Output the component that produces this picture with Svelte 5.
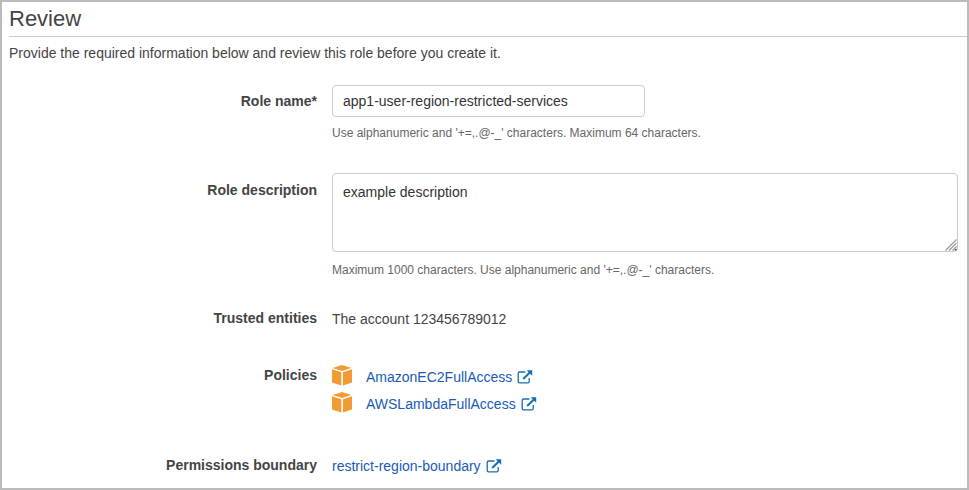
<script>
  let roleName = $state('app1-user-region-restricted-services');
  let description = $state('example description');
  const policies = ['AmazonEC2FullAccess', 'AWSLambdaFullAccess'];
</script>

{#snippet external()}
  <svg class="external" viewBox="0 0 16 14" width="16" height="14" aria-hidden="true">
    <path d="M8.4 2H2.6Q1.2 2 1.2 3.4V11.4Q1.2 12.8 2.6 12.8H10.8Q12.2 12.8 12.2 11.4V8" fill="none" stroke="currentColor" stroke-width="1.3" />
    <path d="M6.2 9L12.6 2.8" fill="none" stroke="currentColor" stroke-width="2" />
    <path d="M9.6 0.2H15.2V5.8Z" fill="currentColor" />
  </svg>
{/snippet}

<main>
  <h1>Review</h1>
  <p class="intro">Provide the required information below and review this role before you create it.</p>

  <form>
    <div class="row name">
      <label for="role-name">Role name*</label>
      <div class="field">
        <input id="role-name" type="text" bind:value={roleName} aria-describedby="name-help" />
        <p class="help" id="name-help">Use alphanumeric and '+=,.@-_' characters. Maximum 64 characters.</p>
      </div>
    </div>

    <div class="row description">
      <label for="role-description">Role description</label>
      <div class="field">
        <div class="area">
          <textarea id="role-description" bind:value={description} aria-describedby="description-help"></textarea>
          <svg class="grip" viewBox="0 0 12 12" width="12" height="12" aria-hidden="true">
            <path d="M0.5 11.5L11.5 0.5M4 11.5L11.5 4M7.5 11.5L11.5 7.5" stroke="#999" stroke-width="1.2" />
            <path d="M10 11.5L11.5 10" stroke="#555" stroke-width="1.4" />
          </svg>
        </div>
        <p class="help" id="description-help">Maximum 1000 characters. Use alphanumeric and '+=,.@-_' characters.</p>
      </div>
    </div>

    <div class="row trusted">
      <span class="label">Trusted entities</span>
      <span class="value">The account 123456789012</span>
    </div>

    <div class="row policies">
      <span class="label">Policies</span>
      <ul>
        {#each policies as policy}
          <li>
            <svg class="cube" viewBox="0 0 20 21" width="20" height="21" aria-hidden="true">
              <path d="M10 0L19.4 2.9L10 5.9L0.6 2.9Z" fill="#f29b34" />
              <path d="M0 4.2L9.3 7.2V20.6L0 17.5Z" fill="#f29b34" />
              <path d="M20 4.2L10.9 7.2V20.6L20 17.5Z" fill="#f29b34" />
            </svg>
            <a href="#{policy}">{policy}{@render external()}</a>
          </li>
        {/each}
      </ul>
    </div>

    <div class="row boundary">
      <span class="label">Permissions boundary</span>
      <span class="value"><a href="#boundary">restrict-region-boundary{@render external()}</a></span>
    </div>
  </form>
</main>

<style>
  :global(body) {
    margin: 0;
    background: #fff;
  }
  main {
    box-sizing: border-box;
    min-height: 100vh;
    padding: 0 0 10px 7px;
    border: 2px solid #bbb;
    color: #444;
    font: 14px/20px "Liberation Sans", Arial, sans-serif;
  }
  h1 {
    margin: 0;
    padding: 3px 0;
    border-bottom: 1px solid #ccc;
    font-size: 22px;
    line-height: 28px;
    font-weight: 400;
  }
  p {
    margin: 0;
  }
  .intro {
    padding-top: 6px;
  }
  form {
    padding: 22px 9px 0 0;
  }
  .row {
    display: grid;
    grid-template-columns: minmax(160px, 308px) minmax(0, 1fr);
    column-gap: 15px;
    align-items: start;
  }
  label,
  .label {
    text-align: right;
    font-weight: 700;
  }
  label {
    padding-top: 6px;
  }
  input,
  textarea {
    display: block;
    box-sizing: border-box;
    width: 100%;
    margin: 0;
    border: 1px solid #ccc;
    border-radius: 4px;
    background: #fff;
    color: #333;
    font: inherit;
  }
  input {
    max-width: 313px;
    height: 32px;
    padding: 0 10px;
  }
  textarea {
    height: 79px;
    padding: 8px 10px;
    resize: none;
  }
  .area {
    position: relative;
  }
  .grip {
    position: absolute;
    right: 1px;
    bottom: 1px;
  }
  .help {
    padding-top: 8px;
    color: #666;
    font-size: 12px;
    line-height: 16px;
  }
  .description {
    margin-top: 32px;
  }
  .description label {
    padding-top: 7px;
  }
  .description .help {
    padding-top: 10px;
  }
  .trusted {
    margin-top: 30px;
  }
  .value {
    padding-top: 1px;
  }
  .policies {
    margin-top: 36px;
  }
  ul {
    margin: 0;
    padding: 0;
    list-style: none;
  }
  li {
    display: flex;
    align-items: flex-start;
    gap: 14px;
    height: 27px;
  }
  li a {
    padding-top: 2px;
  }
  a {
    display: flex;
    align-items: center;
    gap: 5px;
    color: #1a5ab8;
    text-decoration: none;
  }
  .external {
    color: #146eb4;
  }
  .boundary {
    margin-top: 36px;
  }
</style>
